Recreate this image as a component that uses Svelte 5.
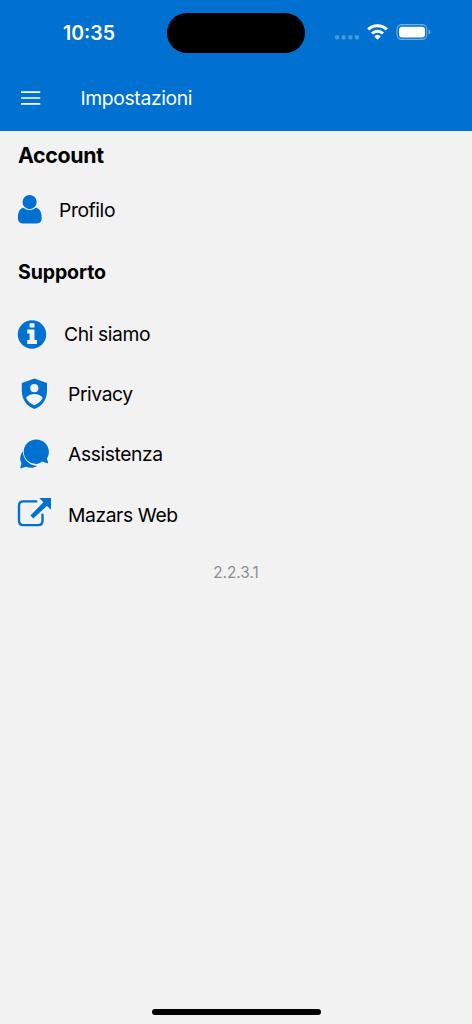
<script>
    const version = '2.2.3.1'
    const links = [
        { icon: 'info', label: 'Chi siamo' },
        { icon: 'shield', label: 'Privacy' },
        { icon: 'chat', label: 'Assistenza' },
        { icon: 'external', label: 'Mazars Web' }
    ]
</script>

<div class="screen">
    <header>
        <div class="status">
            <span class="time">10:35</span>
            <div class="island"></div>
            <svg class="indicators" width="100" height="24" viewBox="332 20 100 24">
                <g fill="#fff" opacity=".28">
                    <rect x="335" y="35.2" width="4.2" height="4.2" rx="1.4" />
                    <rect x="341.6" y="35.2" width="4.2" height="4.2" rx="1.4" />
                    <rect x="348.2" y="35.2" width="4.2" height="4.2" rx="1.4" />
                    <rect x="354.8" y="35.2" width="4.2" height="4.2" rx="1.4" />
                </g>
                <g fill="none" stroke="#fff" stroke-width="3">
                    <path d="M368.2 29.4a13.5 13.5 0 0 1 18.6 0" />
                    <path d="M372 33.5a8 8 0 0 1 11 0" />
                </g>
                <path d="M374.2 36.4a4.8 4.8 0 0 1 6.6 0l-3.3 3.3z" fill="#fff" />
                <rect x="397" y="24.6" width="29.8" height="14.8" rx="4.6" fill="none" stroke="#fff" stroke-opacity=".45" stroke-width="1.1" />
                <rect x="399" y="26.7" width="26" height="10.7" rx="3" fill="#fff" />
                <path d="M428.7 29.6q1.8.7 1.8 2.4t-1.8 2.4z" fill="#fff" opacity=".5" />
            </svg>
        </div>
        <nav>
            <svg class="burger" width="20" height="14" viewBox="0 0 20 14" stroke="#fff" stroke-width="1.7">
                <path d="M0 1.2h19.3M0 7h19.3M0 12.8h19.3" />
            </svg>
            <span class="title">Impostazioni</span>
        </nav>
    </header>

    <main>
        <h1>Account</h1>
        <div class="row profile">
            <svg width="36" height="36" viewBox="16 192 36 36">
                <circle cx="29.6" cy="202.1" r="7.1" />
                <path d="M23.3 207.8Q29.6 212.7 35.9 207.8C40.2 208.4 41.7 213 41.7 218.3C41.7 221.5 39.8 223.5 37 223.5H22.5C19.7 223.5 17.9 221.5 17.9 218.3C17.9 213 19.3 208.4 23.3 207.8Z" />
            </svg>
            <span class="label">Profilo</span>
        </div>

        <h2>Supporto</h2>
        <div class="links">
            {#each links as link}
                <div class="row {link.icon}">
                    {#if link.icon == 'info'}
                        <svg width="36" height="36" viewBox="16 316 36 36">
                            <circle cx="32" cy="334.5" r="14.2" />
                            <path class="cut" d="M29.6 323.3h4.9v4.3h-4.9zM27.2 329.5h7.3v10.4h2.5v4h-9.8v-4h2.4v-6.5h-2.4z" />
                        </svg>
                    {:else if link.icon == 'shield'}
                        <svg width="36" height="36" viewBox="16 376 36 36">
                            <path d="M34.4 378.5L47 383.1V391C47 399.5 41.9 406.4 34.4 408.9C26.9 406.4 21.8 399.5 21.8 391V383.1Z" />
                            <circle class="cut" cx="34.3" cy="388.2" r="4.1" />
                            <path class="cut" d="M26 398C27.6 395.2 30.8 394 34.3 394S41 395.2 42.7 398C40.7 401.6 37.8 404 34.3 405.3C30.8 404 28 401.6 26 398Z" />
                        </svg>
                    {:else if link.icon == 'chat'}
                        <svg width="36" height="36" viewBox="16 436 36 36">
                            <path d="M22.7 451.2C20 455 19.3 459 21.2 462.7C21.8 464.4 20.4 466.2 20.3 467.4C20.3 468.4 21 468.3 22 468L26.1 466.8C30 468.4 34 468.2 37.2 465.8C29.3 465.7 23.2 459.4 22.7 451.2Z" />
                            <path d="M36.2 439.5C43.2 439.5 48.9 445 48.9 451.9C48.9 454.2 48.2 456.3 47 458.2C46.7 459.4 48.1 461.2 48.1 462.4C48.1 463.3 47.4 463.3 46.5 463L42.2 461.6C40.4 463 38.3 463.9 36.2 463.9C29.3 463.9 23.7 458.8 23.7 451.8S29.3 439.5 36.2 439.5Z" />
                        </svg>
                    {:else}
                        <svg width="36" height="36" viewBox="16 496 36 36">
                            <path class="line" d="M36.2 501.4H23.3Q19 501.4 19 505.7V520.8Q19 525.1 23.3 525.1H38.2Q42.5 525.1 42.5 520.8V514.8" />
                            <path d="M39.3 498H51V509.8L47 505.9L33.2 518.4L30.4 515.4L43.4 502.3Z" />
                        </svg>
                    {/if}
                    <span class="label">{link.label}</span>
                </div>
            {/each}
        </div>
        <p class="version">{version}</p>
    </main>

    <div class="home"></div>
</div>

<style>
    :global(body) {
        background: #f2f2f2;
    }
    .screen {
        display: flex;
        flex-direction: column;
        width: 472px;
        height: 1024px;
        overflow: hidden;
        background: #f2f2f2;
        color: #000;
        font-family: Inter, 'Liberation Sans', sans-serif;
    }
    header {
        height: 131px;
        background: #0071d0;
        color: #fff;
    }
    .status {
        display: grid;
        grid-template-columns: 167px 138px 1fr;
        align-items: center;
        height: 65px;
    }
    .time {
        padding-left: 63px;
        font-size: 19.5px;
        font-weight: 600;
    }
    .island {
        height: 40px;
        border-radius: 20px;
        background: #000;
    }
    .indicators {
        margin: -1px 0 0 27px;
    }
    nav {
        display: flex;
        align-items: center;
        height: 66px;
        padding-left: 21px;
    }
    .title {
        margin-left: 39.5px;
        font-size: 19.3px;
        letter-spacing: -.35px;
    }
    main {
        flex: 1;
    }
    h1, h2 {
        margin: 0;
        padding-left: 18px;
        font-weight: 700;
    }
    h1 {
        height: 50px;
        font-size: 21.3px;
        line-height: 49px;
        letter-spacing: -.3px;
    }
    h2 {
        height: 76px;
        font-size: 19.5px;
        line-height: 88px;
        letter-spacing: -.1px;
    }
    .row {
        display: flex;
        align-items: center;
        height: 60px;
        padding-left: 16px;
    }
    .profile {
        height: 47px;
        margin-top: 5px;
        margin-bottom: -5px;
    }
    .row svg {
        flex: none;
        fill: #0071d0;
    }
    .row .cut {
        fill: #f2f2f2;
    }
    .row .line {
        fill: none;
        stroke: #0071d0;
        stroke-width: 2.4;
        stroke-linecap: round;
    }
    .label {
        margin-left: 16px;
        font-size: 19.3px;
        letter-spacing: -.4px;
    }
    .profile .label {
        margin-left: 7px;
    }
    .info .label {
        margin-left: 12px;
    }
    .external .label {
        padding-top: 1px;
    }
    .version {
        margin: 19px 0 0;
        text-align: center;
        font-size: 15.3px;
        line-height: 20px;
        color: #8b8e94;
    }
    .home {
        width: 169px;
        height: 6px;
        margin: 0 auto 9px;
        border-radius: 3px;
        background: #000;
    }
</style>
